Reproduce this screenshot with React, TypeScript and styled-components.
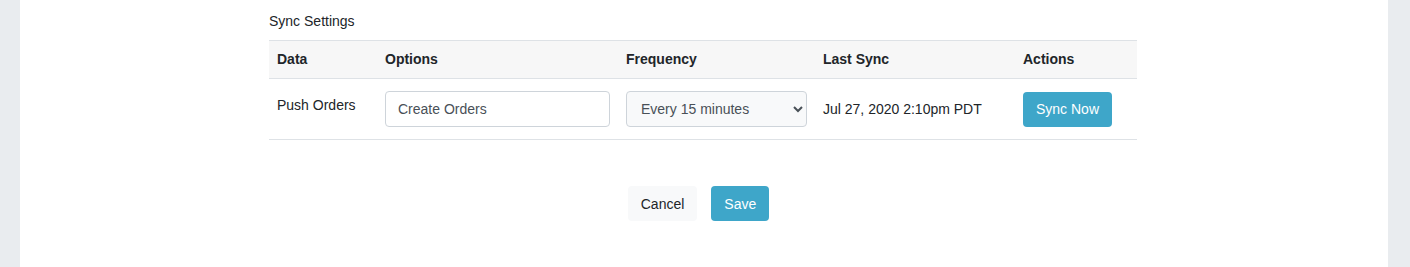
import styled, { createGlobalStyle } from "styled-components";

const GlobalStyle = createGlobalStyle`
    html, body {
        margin: 0;
        padding: 0;
        background: #e9ecef;
        font-family: "Liberation Sans", Arial, sans-serif;
        font-size: 14px;
        color: #212529;
    }
`

const Page = styled.div `
    padding: 0 22px 0 20px;
    min-height: 267px;
    box-sizing: border-box;
`

const Panel = styled.main `
    background: #ffffff;
    min-height: 267px;
    padding: 11px 0 45px 249px;
    box-sizing: border-box;
`

const Section = styled.section `
    width: 868px;
`

const SectionTitle = styled.div `
    line-height: 21px;
    height: 29px;
`

const Table = styled.table `
    width: 100%;
    border-collapse: collapse;
    table-layout: fixed;
`

const HeadCell = styled.th<{ $width: number }> `
    width: ${props => props.$width}px;
    text-align: left;
    font-weight: bold;
    background: #f7f7f7;
    border-top: 1px solid #dee2e6;
    border-bottom: 1px solid #dee2e6;
    height: 38px;
    padding: 0 8px;
    box-sizing: border-box;
    line-height: 21px;
`

const Cell = styled.td<{ $top?: boolean }> `
    border-bottom: 1px solid #dee2e6;
    padding: ${props => props.$top ? "16px 8px 0 8px" : "12px 8px"};
    vertical-align: ${props => props.$top ? "top" : "middle"};
    line-height: 21px;
    height: 60px;
    box-sizing: border-box;
`

const Input = styled.input `
    width: 100%;
    height: 36px;
    box-sizing: border-box;
    border: 1px solid #ced4da;
    border-radius: 4px;
    padding: 0 12px;
    font-family: inherit;
    font-size: 14px;
    color: #495057;
    background: #fff;
    display: block;
`

const Select = styled.select `
    width: 181px;
    height: 36px;
    box-sizing: border-box;
    border: 1px solid #ced4da;
    border-radius: 4px;
    padding: 0 10px;
    font-family: inherit;
    font-size: 14px;
    color: #495057;
    background: #f8f9fa;
    display: block;
`

const Button = styled.button<{ $primary?: boolean }> `
    font-family: inherit;
    font-size: 14px;
    height: 35px;
    padding: 0 13px;
    border: none;
    border-radius: 4px;
    cursor: pointer;
    background: ${props => props.$primary ? "#3ea6c9" : "#f8f9fa"};
    color: ${props => props.$primary ? "#ffffff" : "#212529"};
`

const Footer = styled.div `
    display: flex;
    justify-content: center;
    gap: 14px;
    margin-top: 46px;
    padding-right: 9px;
`

const App = () => {

    return(
        <>
            <GlobalStyle />
            <Page>
                <Panel>
                    <Section>
                        <SectionTitle>Sync Settings</SectionTitle>
                        <Table>
                            <thead>
                                <tr>
                                    <HeadCell $width={108}>Data</HeadCell>
                                    <HeadCell $width={241}>Options</HeadCell>
                                    <HeadCell $width={197}>Frequency</HeadCell>
                                    <HeadCell $width={200}>Last Sync</HeadCell>
                                    <HeadCell $width={122}>Actions</HeadCell>
                                </tr>
                            </thead>
                            <tbody>
                                <tr>
                                    <Cell $top>Push Orders</Cell>
                                    <Cell><Input defaultValue="Create Orders" /></Cell>
                                    <Cell>
                                        <Select defaultValue="15">
                                            <option value="5">Every 5 minutes</option>
                                            <option value="15">Every 15 minutes</option>
                                            <option value="60">Every hour</option>
                                        </Select>
                                    </Cell>
                                    <Cell>Jul 27, 2020 2:10pm PDT</Cell>
                                    <Cell><Button $primary>Sync Now</Button></Cell>
                                </tr>
                            </tbody>
                        </Table>
                        <Footer>
                            <Button>Cancel</Button>
                            <Button $primary>Save</Button>
                        </Footer>
                    </Section>
                </Panel>
            </Page>
        </>
    )
}

export default App;
